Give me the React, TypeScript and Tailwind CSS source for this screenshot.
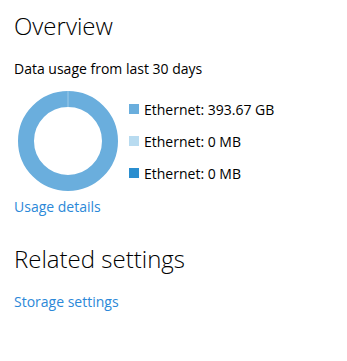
import React from "react";

/* Data usage overview panel, settings style */

const legend = [
  { label: "Ethernet: 393.67 GB", color: "bg-[#6aaedd]" },
  { label: "Ethernet: 0 MB", color: "bg-[#b8dbf0]" },
  { label: "Ethernet: 0 MB", color: "bg-[#2a8ecf]" },
];

function Donut() {
  return (
    <svg width="100" height="100" viewBox="0 0 100 100">
      <circle cx="50" cy="50" r="42" fill="none" stroke="#6aaedd" strokeWidth="16" />
      <line x1="50" y1="0" x2="50" y2="16" stroke="#9ccbe9" strokeWidth="1" />
    </svg>
  );
}

export default function App() {
  return (
    <div
      className="w-[347px] h-[361px] bg-white px-[14px] pt-[10px] text-[#000]"
      style={{ fontFamily: '"Open Sans", "Noto Sans", sans-serif' }}
    >
      <h1 className="text-[24px] leading-[32px] font-light">Overview</h1>
      <p className="mt-[17px] text-[14px] leading-[20px]">Data usage from last 30 days</p>

      <div className="mt-[12px] flex items-start">
        <div className="ml-[4px]">
          <Donut />
        </div>
        <ul className="ml-[11px] mt-[8px] flex flex-col gap-[12px]">
          {legend.map((item, i) => (
            <li key={i} className="flex items-center h-[20px] text-[14px]">
              <span className={`w-[10px] h-[10px] ${item.color}`} />
              <span className="ml-[5px]">{item.label}</span>
            </li>
          ))}
        </ul>
      </div>

      <a className="block mt-[6px] text-[14px] leading-[20px] text-[#2b88d8]">Usage details</a>

      <h2 className="mt-[26px] text-[24px] leading-[32px] font-light">Related settings</h2>

      <a className="block mt-[17px] text-[14px] leading-[20px] text-[#2b88d8]">Storage settings</a>
    </div>
  );
}
